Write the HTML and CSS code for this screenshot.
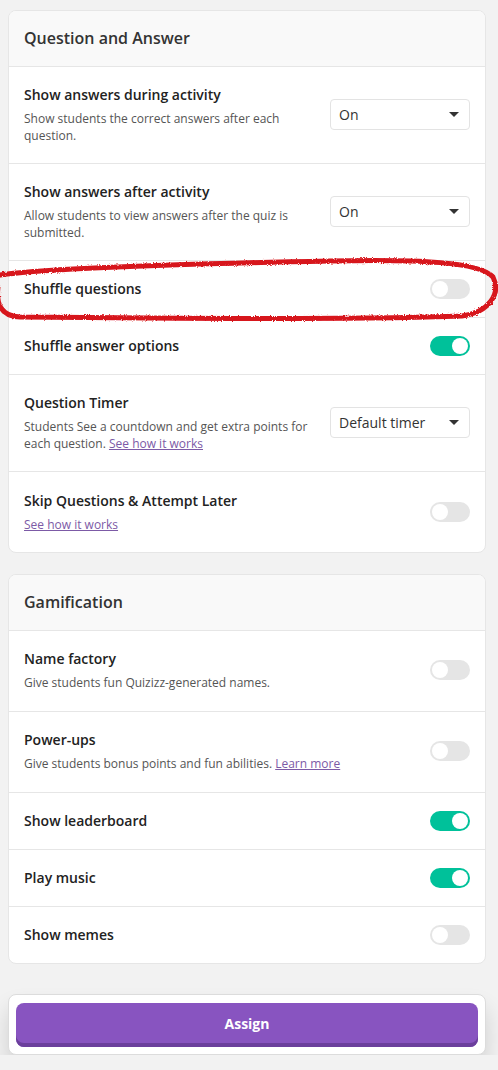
FILE: index.html
```html
<!DOCTYPE html>
<html lang="en">
<head>
    <meta charset="UTF-8">
    <meta name="viewport" content="width=device-width, initial-scale=1.0">
    <title>Assign Settings</title>
    <link rel="stylesheet" href="styles.css">
</head>
<body>
    <div class="page">
        <section class="card">
            <div class="card-head">Question and Answer</div>

            <div class="row">
                <div class="info">
                    <div class="label">Show answers during activity</div>
                    <div class="desc">Show students the correct answers after each question.</div>
                </div>
                <div class="select"><span>On</span><i class="caret"></i></div>
            </div>

            <div class="row">
                <div class="info">
                    <div class="label">Show answers after activity</div>
                    <div class="desc">Allow students to view answers after the quiz is submitted.</div>
                </div>
                <div class="select"><span>On</span><i class="caret"></i></div>
            </div>

            <div class="row single">
                <div class="info">
                    <div class="label">Shuffle questions</div>
                </div>
                <div class="toggle"></div>
            </div>

            <div class="row single">
                <div class="info">
                    <div class="label">Shuffle answer options</div>
                </div>
                <div class="toggle on"></div>
            </div>

            <div class="row">
                <div class="info">
                    <div class="label">Question Timer</div>
                    <div class="desc">Students See a countdown and get extra points for each question. <a href="#">See how it works</a></div>
                </div>
                <div class="select"><span>Default timer</span><i class="caret"></i></div>
            </div>

            <div class="row short skip">
                <div class="info">
                    <div class="label">Skip Questions &amp; Attempt Later</div>
                    <div class="desc"><a href="#">See how it works</a></div>
                </div>
                <div class="toggle"></div>
            </div>
        </section>

        <section class="card">
            <div class="card-head">Gamification</div>

            <div class="row short">
                <div class="info">
                    <div class="label">Name factory</div>
                    <div class="desc">Give students fun Quizizz-generated names.</div>
                </div>
                <div class="toggle"></div>
            </div>

            <div class="row short">
                <div class="info">
                    <div class="label">Power-ups</div>
                    <div class="desc">Give students bonus points and fun abilities. <a href="#">Learn more</a></div>
                </div>
                <div class="toggle"></div>
            </div>

            <div class="row single">
                <div class="info">
                    <div class="label">Show leaderboard</div>
                </div>
                <div class="toggle on"></div>
            </div>

            <div class="row single">
                <div class="info">
                    <div class="label">Play music</div>
                </div>
                <div class="toggle on"></div>
            </div>

            <div class="row single">
                <div class="info">
                    <div class="label">Show memes</div>
                </div>
                <div class="toggle"></div>
            </div>
        </section>

        <div class="footer">
            <button class="assign">Assign</button>
        </div>
    </div>

    <!-- hand-drawn highlight around "Shuffle questions" -->
    <svg class="scribble" width="498" height="80" viewBox="0 250 498 80">
        <defs>
            <filter id="rough" x="-5%" y="-20%" width="110%" height="140%">
                <feTurbulence type="fractalNoise" baseFrequency="0.9" numOctaves="2" seed="3" result="noise" />
                <feDisplacementMap in="SourceGraphic" in2="noise" scale="3" />
            </filter>
        </defs>
        <path d="M -6 276 C 40 268, 180 264, 330 261 C 420 259, 480 262, 493 277 C 501 293, 490 312, 462 316 C 360 320, 120 318, 20 317 C 0 316, -4 303, -2 287" />
    </svg>
</body>
</html>
```
FILE: styles.css
```css
body {
    margin: 0;
    background: #f2f2f2;
    font-family: 'Open Sans', 'Liberation Sans', sans-serif;
    color: #222;
}
.page {
    width: 478px;
    padding: 10px 0 0 8px;
    display: flex;
    flex-direction: column;
    gap: 21px;
}
.card {
    background: #fff;
    border: 1px solid #e6e6e6;
    border-radius: 8px;
    overflow: hidden;
}
.card-head {
    background: #f9f9f9;
    height: 55px;
    line-height: 55px;
    padding: 0 15px;
    font-size: 16px;
    font-weight: 600;
    color: #333;
    border-bottom: 1px solid #e6e6e6;
}
.row {
    display: flex;
    align-items: center;
    justify-content: space-between;
    gap: 16px;
    padding: 18px 15px 19px;
    border-bottom: 1px solid #e6e6e6;
}
.row:last-child {
    border-bottom: none;
}
.row.single {
    padding: 18px 15px;
}
.row.short {
    padding-bottom: 20px;
}
.row.skip {
    padding-top: 19px;
    padding-bottom: 19px;
}
.info {
    flex: 1;
}
.label {
    font-size: 14px;
    font-weight: 600;
    line-height: 20px;
    color: #222;
}
.desc {
    margin-top: 5px;
    font-size: 12px;
    line-height: 17px;
    color: #555;
}
.desc a {
    color: #7c5aa6;
    text-decoration: underline;
}
.select {
    width: 140px;
    height: 31px;
    box-sizing: border-box;
    border: 1px solid #e3e3e3;
    border-radius: 4px;
    display: flex;
    align-items: center;
    justify-content: space-between;
    padding: 0 10px 0 8px;
    font-size: 14px;
    color: #333;
    flex-shrink: 0;
}
.caret {
    width: 0;
    height: 0;
    border-left: 5px solid transparent;
    border-right: 5px solid transparent;
    border-top: 5px solid #333;
}
.toggle {
    width: 40px;
    height: 20px;
    border-radius: 10px;
    background: #e5e5e5;
    position: relative;
    flex-shrink: 0;
}
.toggle::after {
    content: "";
    position: absolute;
    top: 2px;
    left: 2px;
    width: 16px;
    height: 16px;
    border-radius: 50%;
    background: #fff;
}
.toggle.on {
    background: #00c19a;
}
.toggle.on::after {
    left: 22px;
}
.footer {
    margin-top: 9px;
    background: #fff;
    border: 1px solid #dcdcdc;
    border-radius: 8px;
    padding: 8px 7px 7px;
    box-shadow: 0 14px 22px rgba(0, 0, 0, 0.14);
}
.assign {
    width: 100%;
    height: 44px;
    border: none;
    border-radius: 8px;
    background: #8854c0;
    box-shadow: inset 0 -4px 0 #6b3f9c;
    color: #fff;
    font-family: 'Open Sans', 'Liberation Sans', sans-serif;
    font-size: 14px;
    font-weight: 700;
    padding-bottom: 4px;
    display: block;
}
.scribble {
    position: absolute;
    left: 0;
    top: 250px;
    overflow: visible;
}
.scribble path {
    fill: none;
    stroke: #d7141c;
    stroke-width: 5;
    stroke-linecap: round;
    filter: url(#rough);
}
```
